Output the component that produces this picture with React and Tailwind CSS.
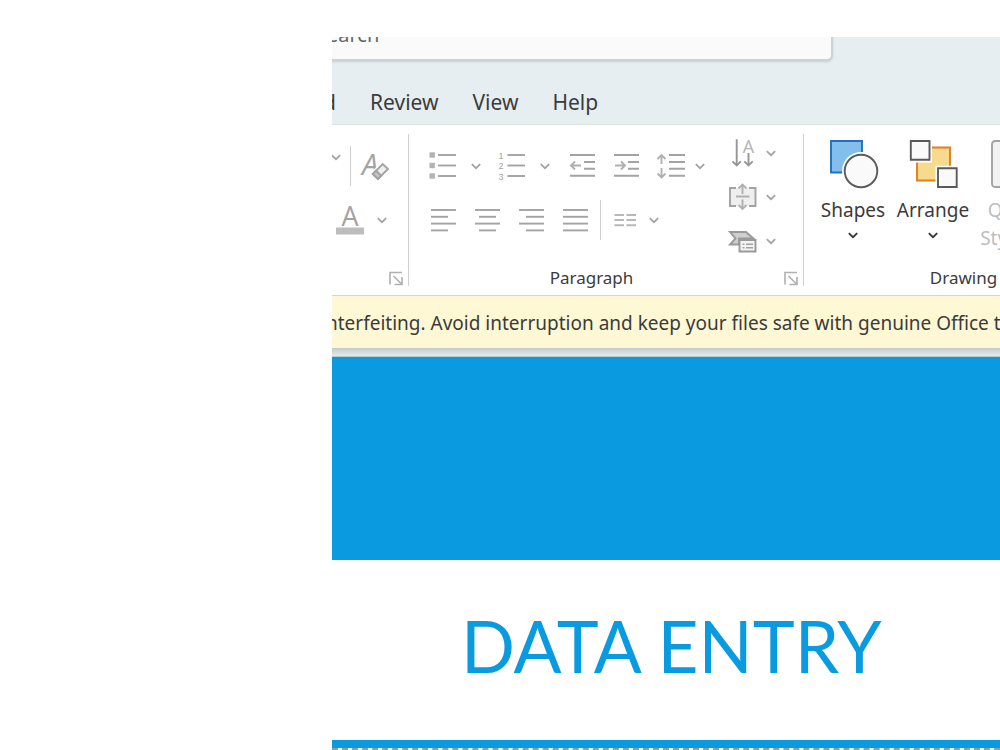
import clsx from 'clsx';

const tabs = ['Review', 'View', 'Help'];

// left/right ends of the four strokes of each alignment icon
const alignments = [
  { name: 'Align Left', rows: [[2, 27], [2, 19], [2, 27], [2, 19]] },
  { name: 'Center', rows: [[2, 27], [6, 23], [2, 27], [6, 23]] },
  { name: 'Align Right', rows: [[2, 27], [9, 27], [2, 27], [9, 27]] },
  { name: 'Justify', rows: [[2, 27], [2, 27], [2, 27], [2, 27]] },
];

export default function App() {
  return (
    <div className="min-h-screen bg-white pt-[37px] pl-[332px] font-['Noto_Sans','Open_Sans',sans-serif] text-[#3b3b3b]">
      <div className="overflow-hidden">
        <Header />
        <Ribbon />
        <LicenseBanner />
        <Slide />
      </div>
    </div>
  );
}

function Header() {
  return (
    <header className="border-b border-[#dbe2e7] bg-[#e6eef2]">
      <input
        type="search"
        aria-label="Search"
        placeholder="Search"
        className="-mt-6 -ml-5 block h-12 w-[521px] rounded-md border-r-2 border-b-2 border-[#cdd2d5] bg-[#fafafa] pb-[3px] pl-1 text-xl text-[#555] shadow-sm outline-none placeholder:text-[#666]"
      />
      <nav className="flex h-[63px] items-center gap-[34px] pt-5 text-[21px]">
        <div className="flex w-1 justify-end">
          <a href="#record">Record</a>
        </div>
        {tabs.map((tab) => (
          <a key={tab} href={`#${tab.toLowerCase()}`}>{tab}</a>
        ))}
      </nav>
    </header>
  );
}

function Ribbon() {
  return (
    <div className="flex border-b border-[#d4d4d4] bg-white pt-[9px] pb-[9px]">
      <FontGroup />
      <ParagraphGroup />
      <DrawingGroup />
    </div>
  );
}

function Group({ label, launcher, className, children }) {
  return (
    <section className={clsx('flex h-[152px] shrink-0 flex-col border-r border-[#d0d0d0]', className)}>
      <div className="flex flex-1">{children}</div>
      <div className="flex h-4 items-center">
        <span className={clsx('flex-1 text-center text-[17px] leading-4', launcher && 'pr-[10px]')}>{label}</span>
        {launcher && (
          <button type="button" aria-label={launcher} className="mr-[5px]">
            <LauncherIcon />
          </button>
        )}
      </div>
    </section>
  );
}

function FontGroup() {
  return (
    <Group launcher="Font settings" className="w-[77px]">
      <div className="pt-[5px]">
        <div className="flex h-[54px] items-center">
          <button type="button" aria-label="Text effects" className="-ml-px mb-[18px]">
            <Chevron />
          </button>
          <div className="ml-[9px] h-10 w-px bg-[#cfcfcf]" />
          <button type="button" aria-label="Clear formatting" className="ml-[10px]">
            <ClearFormatIcon />
          </button>
        </div>
        <button type="button" aria-label="Font color" className="ml-1 flex h-[54px] items-center gap-[13px]">
          <FontColorIcon />
          <Chevron />
        </button>
      </div>
    </Group>
  );
}

function ParagraphGroup() {
  return (
    <Group label="Paragraph" launcher="Paragraph settings" className="w-[395px]">
      <div className="flex-1 pt-[5px] pl-5">
        <div className="flex h-[54px] items-center">
          <button type="button" aria-label="Bullets" className="flex items-center gap-[14px]">
            <BulletsIcon />
            <Chevron />
          </button>
          <button type="button" aria-label="Numbering" className="ml-[17px] flex items-center gap-[14px]">
            <NumberingIcon />
            <Chevron />
          </button>
          <button type="button" aria-label="Decrease indent" className="ml-[19px]">
            <IndentIcon head="M6 9.500 2 13.500l4 4" />
          </button>
          <button type="button" aria-label="Increase indent" className="ml-4">
            <IndentIcon head="M8 9.500l4 4-4 4" />
          </button>
          <button type="button" aria-label="Line spacing" className="ml-4 flex items-center gap-[10px]">
            <LineSpacingIcon />
            <Chevron />
          </button>
        </div>
        <div className="flex h-[54px] items-center">
          <div className="flex gap-4">
            {alignments.map(({ name, rows }) => (
              <button key={name} type="button" aria-label={name}>
                <AlignIcon rows={rows} />
              </button>
            ))}
          </div>
          <div className="ml-[11px] h-10 w-px bg-[#cfcfcf]" />
          <button type="button" aria-label="Columns" className="ml-[13px] flex items-center gap-[13px]">
            <ColumnsIcon />
            <Chevron />
          </button>
        </div>
      </div>
      <div className="flex flex-col gap-4 pt-[5px] pr-[27px]">
        <button type="button" aria-label="Text direction" className="flex items-center gap-[9px]">
          <TextDirectionIcon />
          <Chevron />
        </button>
        <button type="button" aria-label="Align text" className="flex items-center gap-[9px]">
          <AlignTextIcon />
          <Chevron />
        </button>
        <button type="button" aria-label="Convert to SmartArt" className="flex items-center gap-[9px]">
          <SmartArtIcon />
          <Chevron />
        </button>
      </div>
    </Group>
  );
}

function DrawingGroup() {
  return (
    <Group label="Drawing" className="w-[320px]">
      <div className="flex items-start pt-[6px] pl-[9px] text-[19px] leading-7">
        <button type="button" className="flex w-20 flex-col items-center">
          <ShapesIcon />
          <span className="mt-[6px]">Shapes</span>
          <Chevron className="mt-[6px] text-[#333]" />
        </button>
        <button type="button" className="flex w-20 flex-col items-center">
          <ArrangeIcon />
          <span className="mt-[6px]">Arrange</span>
          <Chevron className="mt-[6px] text-[#333]" />
        </button>
        <button type="button" disabled className="flex w-20 flex-col items-center text-[#bdbdbd]">
          <QuickStylesIcon />
          <span className="mt-[6px]">Quick</span>
          <span className="flex items-center gap-1">
            Styles
            <Chevron />
          </span>
        </button>
      </div>
    </Group>
  );
}

function LicenseBanner() {
  return (
    <>
      <p className="h-[52px] overflow-hidden bg-[#fef8d5] text-[19px] leading-[54px] whitespace-nowrap">
        <span className="-ml-[6px]">
          nterfeiting. Avoid interruption and keep your files safe with genuine Office today.
        </span>
      </p>
      <div className="h-[9px] border-b border-[#bccace] bg-linear-to-b from-[#c3cacc] to-[#e4ebed]" />
    </>
  );
}

function Slide() {
  return (
    <main className="bg-white">
      <div className="h-[203px] bg-[#0a9ae0]" />
      <h1 className="h-[180px] pl-[129px] font-['Lato',sans-serif] text-[71px] leading-[172px] whitespace-nowrap text-[#0a9ae0]">
        DATA ENTRY
      </h1>
      <div className="h-[10px] border-b-2 border-dashed border-[#8f9ca5] bg-[#0a9ae0] bg-clip-padding" />
    </main>
  );
}

/* Icons */

function Icon({ size = 28, children }) {
  return (
    <svg width={size} height={size} viewBox={`0 0 ${size} ${size}`} fill="none" stroke="#a3a3a3" strokeWidth="1.9" className="overflow-visible" aria-hidden="true">
      {children}
    </svg>
  );
}

function Chevron({ className = 'text-[#a3a3a3]' }) {
  return (
    <svg width="10" height="10" viewBox="0 0 10 10" fill="none" stroke="currentColor" strokeWidth="1.8" className={className} aria-hidden="true">
      <path d="M0.800 3.200 5 7.200l4.200-4" />
    </svg>
  );
}

function LauncherIcon() {
  return (
    <Icon size={14}>
      <path d="M1 13.500V1.500h12M4.500 5l8 8M13 6v7.500H5.500" strokeWidth="1.6" stroke="#b0b0b0" />
    </Icon>
  );
}

function ClearFormatIcon() {
  return (
    <Icon>
      <text x="1" y="23" fontSize="29" fontStyle="italic" fontFamily="Open Sans" fill="#a3a3a3" stroke="none">A</text>
      <path d="M11.300 22 21.700 11.700l5.600 5L16.700 27.500z" fill="#efefef" stroke="#fff" strokeWidth="4" />
      <path d="M11.800 22 21.700 12l5.300 5L16.900 27z" fill="#efefef" />
      <path d="M11.800 22l3.200-3.300 5.300 5L16.900 27z" fill="#c4c4c4" />
    </Icon>
  );
}

function FontColorIcon() {
  return (
    <Icon>
      <text x="14" y="20" fontSize="27" textAnchor="middle" fontFamily="Open Sans" fill="#a3a3a3" stroke="none">A</text>
      <path d="M0 21.500h28V28.500H0z" fill="#bdbdbd" stroke="none" />
    </Icon>
  );
}

function BulletsIcon() {
  return (
    <Icon>
      {[3, 13.5, 24].map((y) => (
        <g key={y}>
          <rect x="0.500" y={y - 2.7} width="5.400" height="5.400" fill="#b3b3b3" stroke="none" />
          <path d={`M9 ${y}h18`} />
        </g>
      ))}
    </Icon>
  );
}

function NumberingIcon() {
  return (
    <Icon>
      {[3, 13.5, 24].map((y, i) => (
        <g key={y}>
          <text x="0.500" y={y + 3.5} fontSize="9" fontFamily="Liberation Sans" fill="#a3a3a3" stroke="none">{i + 1}</text>
          <path d={`M9.500 ${y}H27`} />
        </g>
      ))}
    </Icon>
  );
}

function IndentIcon({ head }) {
  return (
    <Icon>
      <path d="M1 3h25M15 10h11M15 16.800h11M1 23.800h25" />
      <path d={`M2 13.500h10${head}`} stroke="#b0b0b0" />
    </Icon>
  );
}

function LineSpacingIcon() {
  return (
    <Icon>
      <path d="M12 3h16M12 10h16M12 16.800h16M12 23.800h16" />
      <path d="M4.500 12V3M0.500 7l4-4 4 4M4.500 16v9.500M0.500 21.500l4 4 4-4" stroke="#b0b0b0" />
    </Icon>
  );
}

function AlignIcon({ rows }) {
  return (
    <Icon>
      {rows.map(([from, to], i) => (
        <path key={i} d={`M${from} ${4 + i * 6.8}H${to}`} />
      ))}
    </Icon>
  );
}

function ColumnsIcon() {
  return (
    <Icon size={22}>
      <path d="M0.500 6h9.500M12.500 6H22M0.500 11h9.500M12.500 11H22M0.500 16.300h9.500M12.500 16.300H22" stroke="#b8b8b8" />
    </Icon>
  );
}

function TextDirectionIcon() {
  return (
    <Icon>
      <text x="19.500" y="13.500" fontSize="18" textAnchor="middle" fontFamily="Open Sans" fill="#b3b3b3" stroke="none">A</text>
      <path d="M7.700 0.300v26M3.500 22.300l4.200 4.200 4.200-4.200M19.500 14v12.500M15.300 22.300l4.200 4.200 4.200-4.200" stroke="#969696" />
    </Icon>
  );
}

function AlignTextIcon() {
  return (
    <Icon>
      <path d="M1 5h25.500v18H1z" fill="#efefef" stroke="none" />
      <path d="M7 5H1v18h6M20 5h6.500v18H20" />
      <path d="M13.500 11V1.500M9.500 5.500l4-4 4 4M13.500 16.500V26M9.500 22l4 4 4-4M7 13.500h13.500" stroke="#b0b0b0" />
    </Icon>
  );
}

function SmartArtIcon() {
  return (
    <Icon>
      <path d="M1 5h16l7.500 6.500H10V17.500H1l5.500-6z" fill="#cfcfcf" stroke="#999" />
      <path d="M10.500 13h16v11.500h-16z" fill="#f3f3f3" stroke="#999" />
      <path d="M13.500 17.300h2M17 17.300h7M13.500 20.800h2M17 20.800h7" strokeWidth="1.400" />
    </Icon>
  );
}

function ShapesIcon() {
  return (
    <Icon size={50}>
      <path d="M3 1h31v31.500H3z" fill="#83beec" stroke="#1f72bd" />
      <circle cx="33" cy="31" r="19" fill="#fff" stroke="none" />
      <circle cx="33" cy="31" r="16.300" fill="#fafafa" stroke="#5a5a5a" />
    </Icon>
  );
}

function ArrangeIcon() {
  return (
    <Icon size={50}>
      <path d="M9 7.500h33v33H9z" fill="#f8da8c" stroke="#e07f1f" />
      <path d="M0 0h24v22.500H0zM27.500 25.800H50V50H27.500z" fill="#fff" stroke="none" />
      <path d="M2.800 1h18.700v18.700H2.800zM30 28.300h18.700V47H30z" fill="#fafafa" stroke="#5a5a5a" />
    </Icon>
  );
}

function QuickStylesIcon() {
  return (
    <Icon size={50}>
      <rect x="4" y="1" width="44" height="46" rx="3" fill="#f2f2f2" />
    </Icon>
  );
}
